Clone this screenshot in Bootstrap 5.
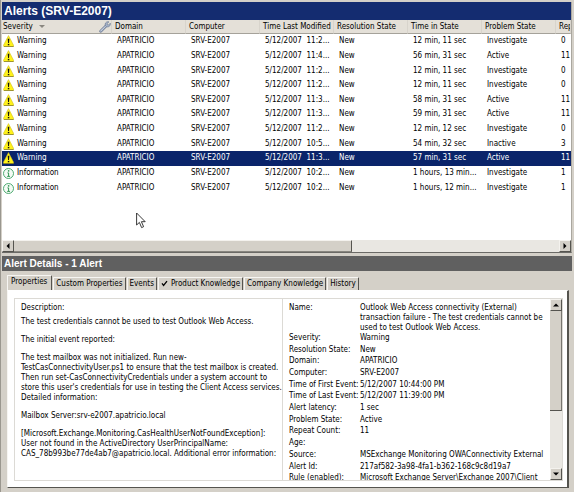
<!DOCTYPE html>
<html lang="en">
<head>
<meta charset="utf-8">
<meta name="viewport" content="width=device-width, initial-scale=1">
<title>Alerts (SRV-E2007)</title>
<link rel="stylesheet" href="https://cdn.jsdelivr.net/npm/bootstrap@5.3.0/dist/css/bootstrap.min.css">
<style>
  :root { --face: #d4d0c8; --navy: #0a246a; --shade: #55544f; }
  body { background: var(--face); color: #000; font-family: "DejaVu Sans Condensed", "DejaVu Sans", sans-serif; font-size: 8px; line-height: 10px; }
  .console { padding: 2px 2px 0 1px; border-left: 1px solid #9a978f; }
  .pane-alerts { flex: 252 1 0; min-height: 0; background: #fff; border-right: 1px solid #aaa79f; border-bottom: 1px solid #6b6a66; }
  .pane-details { flex: 238 1 0; min-height: 0; margin-top: 3px; }
  .pane-title { margin: 0; color: #fff; font-family: "Liberation Sans", Arial, sans-serif; font-weight: 700; padding-left: 2px; }
  .title-alerts { background: #142c70; font-size: 12px; line-height: 18px; }
  .title-details { background: #606060; font-size: 10px; line-height: 15px; }

  .alert-grid { table-layout: fixed; border-collapse: separate; border-spacing: 0; width: 100%; height: 175px; white-space: nowrap; }
  .alert-grid th, .alert-grid td { overflow: hidden; vertical-align: middle; padding: 0 0 0 5px; font-weight: 400; line-height: 10px; }
  .alert-grid th { height: 14px; padding-left: 3px; background: #e4e0d8; border-bottom: 1px solid #a5a29a; border-right: 1px solid #d8d4cc; }
  .alert-grid th:first-child, .alert-grid td:first-child { padding-left: 1px; }
  .col-sev { width: 110px; }
  .col-std { width: 74px; }
  .alert-grid .chosen td { background: var(--navy); color: #fff; }
  .sev { gap: 3px; height: 12px; }
  .sev svg { width: 11px; height: 12px; flex: none; }
  .sort-mark { width: 6px; height: 3px; margin-left: 6px; }
  .wrench { width: 12px; height: 12px; }

  .sb-btn { width: 12px; height: 12px; padding: 0; border: 1px solid; border-color: #f4f2ee #55544f #55544f #f4f2ee; background: var(--face); line-height: 0; flex: none; }
  .sb-btn svg { width: 6px; height: 6px; }
  .sb-track { background: #e9e7e2; }
  .sb-thumb-x { width: 338px; height: 12px; background: var(--face); border-right: 1px solid var(--shade); border-bottom: 1px solid #88867f; border-top: 1px solid #f4f2ee; flex: none; }
  .sb-thumb-y { width: 12px; height: 100px; background: var(--face); border-right: 1px solid #77756f; border-bottom: 1px solid var(--shade); flex: none; }

  .tab-strip { padding: 4px 0 0 5px; gap: 1px; height: 19px; }
  .tab-btn { height: 13px; border: 0; border-top: 1px solid #f6f5f2; border-left: 1px solid #f6f5f2; border-right: 1px solid var(--shade); border-radius: 1px 1px 0 0; background: var(--face); color: #000; padding: 0 2px; line-height: 12px; white-space: nowrap; }
  .tab-btn.current { height: 15px; padding: 0 4px 1px 3px; }
  .tick { width: 7px; height: 7px; margin-right: 3px; }
  .sheet { margin: 0 3px 4px 5px; padding: 7px 4px 6px 6px; background: #fff; border: 1px solid; border-color: #fff #55544f #55544f #f6f5f2; border-right-width: 2px; min-height: 0; }
  .box-desc { width: 49%; border: 1px solid #dcdad5; padding: 4px 0 0 6px; flex: none; overflow: hidden; white-space: nowrap; }
  .box-desc p { margin: 0 0 8px; }
  .box-desc p.tight { margin-bottom: 4px; }
  .box-props { border: 1px solid #dcdad5; border-left: 0; min-width: 0; }
  .props { padding: 4px 0 0 6px; overflow: hidden; min-width: 0; }
  .props .lbl { width: 71px; flex: none; white-space: nowrap; font-weight: 400; }
  .props dd, .props dl { margin: 0; }
  .props dl { height: 182px; flex: none; }
  .prop-name { height: 30px; flex: none; white-space: nowrap; }
  .prop { flex: 1 1 0; min-height: 0; white-space: nowrap; }
  .pointer { position: absolute; left: 135px; top: 212px; width: 10px; height: 17px; }
</style>
<script src="https://cdn.jsdelivr.net/npm/bootstrap@5.3.0/dist/js/bootstrap.bundle.min.js"></script>
</head>
<body>
<svg class="d-none" xmlns="http://www.w3.org/2000/svg">
  <symbol id="i-warn" viewBox="0 0 11 12">
    <path d="M5.500 .6 10.700 10.600 10.200 11.500H.8L.3 10.600Z" fill="#fff21a" stroke="#d2bd24" stroke-width=".6" stroke-linejoin="round"/>
    <path d="M10.800 10.800 10.300 11.600H1" fill="none" stroke="#77701f" stroke-width=".7"/>
    <path d="M4.700 3.800h1.700L6 8H5.100Z" fill="#111"/><rect x="4.800" y="8.900" width="1.500" height="1.400" fill="#111"/>
  </symbol>
  <symbol id="i-info" viewBox="0 0 11 12">
    <circle cx="5.500" cy="6.500" r="5" fill="#f4fbf5" stroke="#3da263" stroke-width=".9"/>
    <rect x="4.900" y="3.200" width="1.400" height="1.400" fill="#1f8a44"/><path d="M4.400 5.900h1.200v3.200M4.200 9.400h2.800" fill="none" stroke="#1f8a44" stroke-width=".9"/>
  </symbol>
</svg>

<main class="console vh-100 d-flex flex-column overflow-hidden position-relative">
  <section class="pane-alerts d-flex flex-column">
    <h1 class="pane-title title-alerts">Alerts (SRV-E2007)</h1>
    <div class="flex-grow-1 overflow-hidden">
      <table class="alert-grid">
        <colgroup><col class="col-sev"><col class="col-std"><col class="col-std"><col class="col-std"><col class="col-std"><col class="col-std"><col class="col-std"><col></colgroup>
        <thead>
          <tr>
            <th scope="col"><div class="d-flex align-items-center">Severity
              <svg class="sort-mark" viewBox="0 0 6 3"><path d="M0 0h6L3 3Z" fill="#8a8780"/></svg>
              <svg class="wrench ms-auto" viewBox="0 0 12 12"><path d="M1.700 10.300 7.200 4.800" stroke="#6f7c96" stroke-width="2.800" stroke-linecap="round"/><path d="M1.800 10 7 4.800" stroke="#c3cede" stroke-width="1.200" stroke-linecap="round"/><path d="M9.900.9 8 2.600l.3 1.200 1.300.2 1.700-1.800c.5 1.800-.8 3.700-2.600 3.700C6.800 5.900 5.900 4.600 6.200 3 6.500 1.300 8.200.3 9.900.9Z" fill="#a9b6cb" stroke="#6f7c96" stroke-width=".7"/></svg></div></th>
            <th scope="col">Domain</th><th scope="col">Computer</th><th scope="col">Time Last Modified</th><th scope="col">Resolution State</th><th scope="col">Time in State</th><th scope="col">Problem State</th><th scope="col">Repeat</th>
          </tr>
        </thead>
        <tbody>
          <tr><td><div class="sev d-flex align-items-center"><svg><use href="#i-warn"/></svg>Warning</div></td><td>APATRICIO</td><td>SRV-E2007</td><td>5/12/2007&nbsp; 11:2...</td><td>New</td><td>12 min, 11 sec</td><td>Investigate</td><td>0</td></tr>
          <tr><td><div class="sev d-flex align-items-center"><svg><use href="#i-warn"/></svg>Warning</div></td><td>APATRICIO</td><td>SRV-E2007</td><td>5/12/2007&nbsp; 11:4...</td><td>New</td><td>56 min, 31 sec</td><td>Active</td><td>11</td></tr>
          <tr><td><div class="sev d-flex align-items-center"><svg><use href="#i-warn"/></svg>Warning</div></td><td>APATRICIO</td><td>SRV-E2007</td><td>5/12/2007&nbsp; 11:2...</td><td>New</td><td>12 min, 11 sec</td><td>Investigate</td><td>0</td></tr>
          <tr><td><div class="sev d-flex align-items-center"><svg><use href="#i-warn"/></svg>Warning</div></td><td>APATRICIO</td><td>SRV-E2007</td><td>5/12/2007&nbsp; 11:2...</td><td>New</td><td>12 min, 11 sec</td><td>Investigate</td><td>0</td></tr>
          <tr><td><div class="sev d-flex align-items-center"><svg><use href="#i-warn"/></svg>Warning</div></td><td>APATRICIO</td><td>SRV-E2007</td><td>5/12/2007&nbsp; 11:3...</td><td>New</td><td>58 min, 31 sec</td><td>Active</td><td>11</td></tr>
          <tr><td><div class="sev d-flex align-items-center"><svg><use href="#i-warn"/></svg>Warning</div></td><td>APATRICIO</td><td>SRV-E2007</td><td>5/12/2007&nbsp; 11:3...</td><td>New</td><td>59 min, 31 sec</td><td>Active</td><td>11</td></tr>
          <tr><td><div class="sev d-flex align-items-center"><svg><use href="#i-warn"/></svg>Warning</div></td><td>APATRICIO</td><td>SRV-E2007</td><td>5/12/2007&nbsp; 11:2...</td><td>New</td><td>12 min, 12 sec</td><td>Investigate</td><td>0</td></tr>
          <tr><td><div class="sev d-flex align-items-center"><svg><use href="#i-warn"/></svg>Warning</div></td><td>APATRICIO</td><td>SRV-E2007</td><td>5/12/2007&nbsp; 10:5...</td><td>New</td><td>54 min, 32 sec</td><td>Inactive</td><td>3</td></tr>
          <tr class="chosen"><td><div class="sev d-flex align-items-center"><svg><use href="#i-warn"/></svg>Warning</div></td><td>APATRICIO</td><td>SRV-E2007</td><td>5/12/2007&nbsp; 11:3...</td><td>New</td><td>57 min, 31 sec</td><td>Active</td><td>11</td></tr>
          <tr><td><div class="sev d-flex align-items-center"><svg><use href="#i-info"/></svg>Information</div></td><td>APATRICIO</td><td>SRV-E2007</td><td>5/12/2007&nbsp; 10:2...</td><td>New</td><td>1 hours, 13 min...</td><td>Investigate</td><td>1</td></tr>
          <tr><td><div class="sev d-flex align-items-center"><svg><use href="#i-info"/></svg>Information</div></td><td>APATRICIO</td><td>SRV-E2007</td><td>5/12/2007&nbsp; 10:2...</td><td>New</td><td>1 hours, 12 min...</td><td>Investigate</td><td>1</td></tr>
        </tbody>
      </table>
    </div>
    <div class="sb-track d-flex">
      <button class="sb-btn" type="button" aria-label="Scroll left"><svg viewBox="0 0 6 6"><path d="M4.500 0v6L1.500 3Z"/></svg></button>
      <div class="sb-thumb-x"></div>
      <button class="sb-btn ms-auto" type="button" aria-label="Scroll right"><svg viewBox="0 0 6 6"><path d="M1.500 0v6l3-3Z"/></svg></button>
    </div>
  </section>

  <section class="pane-details d-flex flex-column">
    <h2 class="pane-title title-details">Alert Details - 1 Alert</h2>
    <div class="tab-strip d-flex align-items-end" role="tablist">
      <button class="tab-btn current" type="button" role="tab" aria-selected="true">Properties</button>
      <button class="tab-btn" type="button" role="tab">Custom Properties</button>
      <button class="tab-btn" type="button" role="tab">Events</button>
      <button class="tab-btn d-flex align-items-center" type="button" role="tab"><svg class="tick" viewBox="0 0 7 7"><path d="M1 3.300 2.600 5.400 6 1.200" fill="none" stroke="#000" stroke-width="1.300"/></svg>Product Knowledge</button>
      <button class="tab-btn" type="button" role="tab">Company Knowledge</button>
      <button class="tab-btn" type="button" role="tab">History</button>
    </div>
    <div class="sheet d-flex flex-grow-1">
      <div class="box-desc">
        <p class="tight">Description:</p>
        <p>The test credentials cannot be used to test Outlook Web Access.</p>
        <p>The initial event reported:</p>
        <p>The test mailbox was not initialized. Run new-<br>TestCasConnectivityUser.ps1 to ensure that the test mailbox is created.<br>Then run set-CasConnectivityCredentials under a system account to<br>store this user's credentials for use in testing the Client Access services.<br>Detailed information:</p>
        <p>Mailbox Server:srv-e2007.apatricio.local</p>
        <p>[Microsoft.Exchange.Monitoring.CasHealthUserNotFoundException]:<br>User not found in the ActiveDirectory UserPrincipalName:<br>CAS_78b993be77de4ab7@apatricio.local. Additional error information:</p>
      </div>
      <div class="box-props d-flex flex-grow-1">
        <div class="props flex-grow-1">
          <dl class="d-flex flex-column">
            <div class="prop-name d-flex"><dt class="lbl">Name:</dt><dd>Outlook Web Access connectivity (External)<br>transaction failure - The test credentials cannot be<br>used to test Outlook Web Access.</dd></div>
            <div class="prop d-flex"><dt class="lbl">Severity:</dt><dd>Warning</dd></div>
            <div class="prop d-flex"><dt class="lbl">Resolution State:</dt><dd>New</dd></div>
            <div class="prop d-flex"><dt class="lbl">Domain:</dt><dd>APATRICIO</dd></div>
            <div class="prop d-flex"><dt class="lbl">Computer:</dt><dd>SRV-E2007</dd></div>
            <div class="prop d-flex"><dt class="lbl">Time of First Event:</dt><dd>5/12/2007 10:44:00 PM</dd></div>
            <div class="prop d-flex"><dt class="lbl">Time of Last Event:</dt><dd>5/12/2007 11:39:00 PM</dd></div>
            <div class="prop d-flex"><dt class="lbl">Alert latency:</dt><dd>1 sec</dd></div>
            <div class="prop d-flex"><dt class="lbl">Problem State:</dt><dd>Active</dd></div>
            <div class="prop d-flex"><dt class="lbl">Repeat Count:</dt><dd>11</dd></div>
            <div class="prop d-flex"><dt class="lbl">Age:</dt><dd></dd></div>
            <div class="prop d-flex"><dt class="lbl">Source:</dt><dd>MSExchange Monitoring OWAConnectivity External</dd></div>
            <div class="prop d-flex"><dt class="lbl">Alert Id:</dt><dd>217af582-3a98-4fa1-b362-168c9c8d19a7</dd></div>
            <div class="prop d-flex"><dt class="lbl">Rule (enabled):</dt><dd>Microsoft Exchange Server\Exchange 2007\Client</dd></div>
          </dl>
        </div>
        <div class="sb-track d-flex flex-column">
          <button class="sb-btn" type="button" aria-label="Scroll up"><svg viewBox="0 0 6 6"><path d="M0 4.500h6L3 1.500Z"/></svg></button>
          <div class="sb-thumb-y"></div>
          <button class="sb-btn mt-auto" type="button" aria-label="Scroll down"><svg viewBox="0 0 6 6"><path d="M0 1.500h6l-3 3Z"/></svg></button>
        </div>
      </div>
    </div>
  </section>

  <svg class="pointer" viewBox="0 0 10 17"><path d="M.6 1v12l2.800-2.600 2.200 5.200 2-.9-2.200-5H9.200Z" fill="#fff" stroke="#222" stroke-width=".9"/></svg>
</main>
</body>
</html>
